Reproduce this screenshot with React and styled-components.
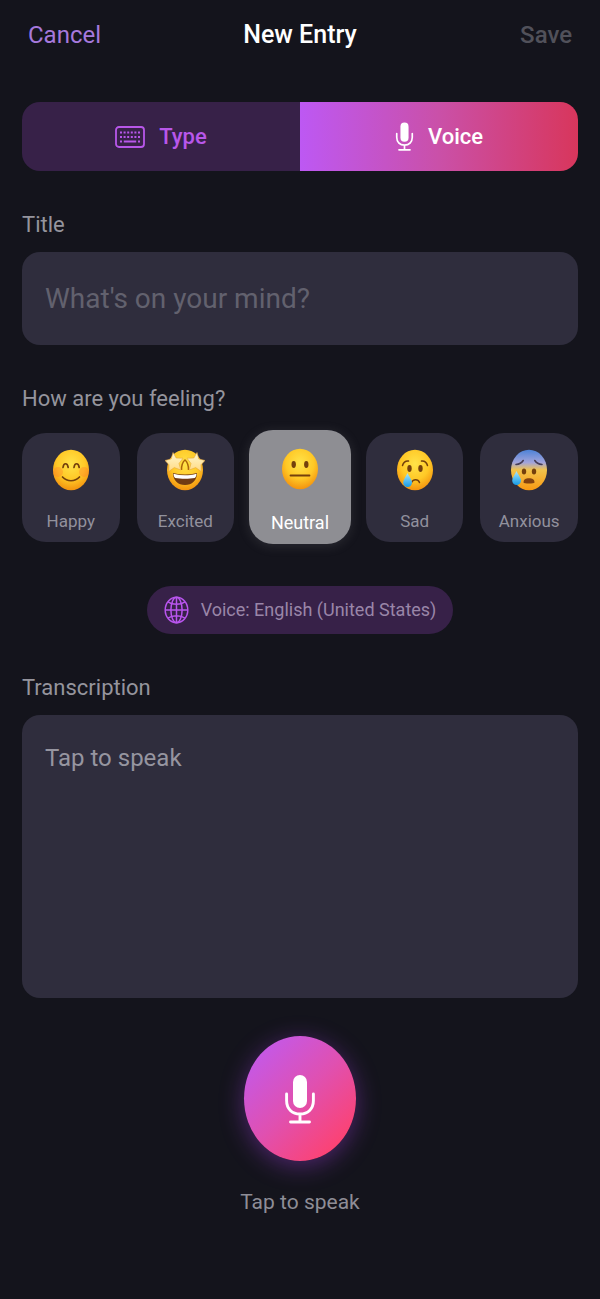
import React, { useState } from "react";
import styled, { createGlobalStyle } from "styled-components";

const GlobalStyle = createGlobalStyle`
    * {
        box-sizing: border-box;
    }

    body {
        margin: 0;
        background: #14141c;
        font-family: Roboto, "Liberation Sans", sans-serif;
    }

    button, input, textarea {
        font-family: inherit;
        border: 0;
        margin: 0;
    }

    button {
        cursor: pointer;
    }
`

const PageStyled = styled.div`
    min-height: 100vh;
    padding: 0 22px 80px;
    background: #14141c;
`

const HeaderStyled = styled.header`
    display: grid;
    grid-template-columns: 1fr auto 1fr;
    align-items: center;
    height: 70px;
    padding: 0 6px;
`

const TitleStyled = styled.h1`
    margin: 0;
    font-size: 25px;
    line-height: 32px;
    font-weight: 500;
    color: #fff;
`

const HeaderButton = styled.button`
    justify-self: ${({ $end }) => ($end ? "end" : "start")};
    padding: 0;
    background: none;
    font-size: 24px;
    line-height: 32px;
    font-weight: ${({ $end }) => ($end ? 500 : 400)};
    color: ${({ $end }) => ($end ? "#51515a" : "#a679dc")};
`

const ModeStyled = styled.div`
    display: flex;
    height: 69px;
    margin-top: 32px;
    border-radius: 18px;
    overflow: hidden;
`

const ModeButton = styled.button`
    flex: 1;
    display: flex;
    align-items: center;
    justify-content: center;
    gap: 14px;
    padding: 0;
    font-size: 22px;
    line-height: 28px;
    font-weight: 500;
    color: ${({ $active }) => ($active ? "#fff" : "#b857ea")};
    background: ${({ $active }) => ($active ? "linear-gradient(90deg, #bd58f3 0%, #ca50a8 50%, #d8365c 100%)" : "#372148")};
`

const SectionStyled = styled.section`
    display: flex;
    flex-direction: column;
    gap: ${({ $gap }) => $gap || 13}px;
    margin-top: 40px;
`

const LabelStyled = styled.label`
    font-size: 22px;
    line-height: 28px;
    color: #95949d;
`

const InputStyled = styled.input`
    width: 100%;
    height: 93px;
    padding: 0 23px;
    border-radius: 18px;
    background: #2f2d3d;
    font-size: 28px;
    color: #fff;
    outline: none;

    &::placeholder {
        color: #62616e;
        opacity: 1;
    }
`

const TextareaStyled = styled.textarea`
    display: block;
    width: 100%;
    height: 283px;
    padding: 27px 23px;
    border-radius: 18px;
    background: #2f2d3d;
    font-size: 24px;
    line-height: 32px;
    color: #fff;
    outline: none;
    resize: none;

    &::placeholder {
        color: #9695a0;
        opacity: 1;
    }
`

const MoodListStyled = styled.div`
    display: grid;
    grid-template-columns: repeat(5, 1fr);
    gap: 17px;
`

const MoodButton = styled.button`
    display: flex;
    flex-direction: column;
    align-items: center;
    justify-content: space-between;
    height: ${({ $active }) => ($active ? 114 : 109)}px;
    margin: ${({ $active }) => ($active ? "-3px -2px -2px" : "0")};
    padding: ${({ $active }) => ($active ? "17px 0 11px" : "15px 0 11px")};
    border-radius: 24px;
    font-size: ${({ $active }) => ($active ? 18 : 17)}px;
    line-height: 20px;
    color: ${({ $active }) => ($active ? "#fff" : "#92919d")};
    background: ${({ $active }) => ($active ? "#8e8e93" : "#2f2d3d")};
    box-shadow: ${({ $active }) => ($active ? "0 2px 12px rgba(142, 142, 147, 0.2)" : "none")};
`

const LanguageButton = styled.button`
    display: flex;
    align-items: center;
    gap: 12px;
    height: 48px;
    margin: 44px auto 0;
    padding: 0 17px;
    border-radius: 24px;
    background: #372148;
    font-size: 18px;
    line-height: 24px;
    color: #9a86a8;
`

const RecordStyled = styled.div`
    display: flex;
    flex-direction: column;
    align-items: center;
    gap: 27px;
    margin-top: 38px;
    font-size: 21px;
    line-height: 28px;
    color: #8e8d96;
`

const RecordButton = styled.button`
    display: flex;
    align-items: center;
    justify-content: center;
    width: 112px;
    height: 125px;
    padding: 0;
    border-radius: 50%;
    background: linear-gradient(135deg, #bf5af2 5%, #e050b0 50%, #ff416c 90%);
    box-shadow: 0 5px 24px rgba(150, 60, 210, 0.45);
`

const KeyboardIcon = () => (
    <svg width="30" height="22" viewBox="0 0 30 22" fill="none" stroke="currentColor" aria-hidden="true">
        <rect x="1" y="1" width="28" height="20" rx="3" strokeWidth="1.8" />
        <path d="M5 6.5h20M5 11h20" strokeWidth="2.1" strokeDasharray="2 1.6" />
        <path d="M5 15.5h2M8.8 15.5h12.4M23 15.5h2" strokeWidth="2" />
    </svg>
)

const MicIcon = ({ width, height }) => (
    <svg width={width} height={height} viewBox="0 0 30 50" fill="none" stroke="#fff" strokeLinecap="round" aria-hidden="true">
        <rect x="8" y="1" width="14" height="33" rx="7" fill="#fff" stroke="none" />
        <path d="M1.6 20v6.5C1.6 35 7.2 40 15 40s13.4-5 13.4-13.5V20M15 40v8M5.5 48h19" strokeWidth="2.9" />
    </svg>
)

const GlobeIcon = () => (
    <svg width="25" height="28" viewBox="0 0 25 28" fill="none" stroke="#b955ee" strokeWidth="1.5" aria-hidden="true">
        <ellipse cx="12.5" cy="14" rx="11.3" ry="12.8" />
        <ellipse cx="12.5" cy="14" rx="5.6" ry="12.8" />
        <path d="M12.5 1.2v25.6M1.2 14h22.6M4 5.8c4.4 3.2 12.6 3.2 17 0M4 22.2c4.4-3.2 12.6-3.2 17 0" />
    </svg>
)

const Tear = () => (
    <path d="M12.5 25c-1.8 4-4.3 6.8-4.3 9.6a4.4 4.4 0 0 0 8.8 0c0-2.8-2.7-5.6-4.5-9.6z" fill="url(#tear)" />
)

const faces = {
    happy: (
        <>
            <ellipse cx="7" cy="24" rx="5" ry="5" fill="#ff7a2c" opacity=".35" />
            <ellipse cx="33" cy="24" rx="5" ry="5" fill="#ff7a2c" opacity=".35" />
            <path d="M12 19.5c.7-5 4.4-5 5.2 0M23 19.5c.7-5 4.4-5 5.2 0M11.5 29c4.8 5 12.2 5 17 0" fill="none" stroke="#74400c" strokeWidth="1.7" strokeLinecap="round" />
        </>
    ),
    excited: (
        <>
            <path d="M8 25c8 2 16 2 24 0 0 7.5-5 12-12 12S8 32.500 8 25z" fill="#713b13" />
            <path d="M8.500 25.700c7.500 2 15.500 2 23 0-.2 2.500-1 4-1.800 4.300-5.500 1.100-13.900 1.100-19.400 0-.8-.3-1.600-1.800-1.800-4.300z" fill="#fff" />
            <path d="M16.500 22c0-5 1-8 3.500-10 2.500 2 3.500 5 3.500 10" fill="none" stroke="#a9650b" strokeWidth="1.500" />
            <path d="M8 4.500l3.200 5.500 6.800.2-4 5.300 1.800 6.500-6.500-2.400-5.600 4 .3-6.800L0 12.500l6.200-1.600z" fill="url(#star)" stroke="#e7a63a" strokeWidth=".6" />
            <path d="M32 4.500l-3.200 5.500-6.800.2 4 5.300-1.800 6.500 6.500-2.400 5.600 4-.3-6.800 4-4.300-6.200-1.600z" fill="url(#star)" stroke="#e7a63a" strokeWidth=".6" />
        </>
    ),
    neutral: (
        <>
            <ellipse cx="13.700" cy="17.500" rx="2.200" ry="3.400" fill="#74400c" />
            <ellipse cx="26.300" cy="17.500" rx="2.200" ry="3.400" fill="#74400c" />
            <path d="M10.500 28.500h19" stroke="#74400c" strokeWidth="1.800" strokeLinecap="round" />
        </>
    ),
    sad: (
        <>
            <ellipse cx="14.500" cy="20.500" rx="2.200" ry="3.400" fill="#74400c" />
            <ellipse cx="25.500" cy="20.500" rx="2.200" ry="3.400" fill="#74400c" />
            <path d="M7.500 17.500c1-3.200 3-4.700 6-4.400M32.500 17.500c-1-3.200-3-4.700-6-4.400M16.500 34.500c1.800-3.800 6.500-3.800 8 0" fill="none" stroke="#74400c" strokeWidth="1.500" strokeLinecap="round" />
            <Tear />
        </>
    ),
    anxious: (
        <>
            <ellipse cx="15" cy="23.500" rx="2.200" ry="3" fill="#74400c" />
            <ellipse cx="25" cy="23.500" rx="2.200" ry="3" fill="#74400c" />
            <path d="M7 16.500c3.500-.3 5.800-1.800 7.200-4M33 16.500c-3.500-.3-5.800-1.800-7.200-4" fill="none" stroke="#453d58" strokeWidth="1.600" strokeLinecap="round" />
            <path d="M14.500 34.500c0-3.300 2.200-4.300 5.500-4.300s5.500 1 5.500 4.300c0 1.300-11 1.300-11 0z" fill="#82420f" />
            <g transform="translate(-5 -2)"><Tear /></g>
        </>
    ),
}

const MoodFace = ({ id }) => (
    <svg width="40" height="44" viewBox="0 0 40 44" aria-hidden="true">
        <defs>
            <radialGradient id="face" cx=".5" cy=".35" r=".65">
                <stop offset="0" stopColor="#ffe349" />
                <stop offset=".6" stopColor="#ffc826" />
                <stop offset="1" stopColor="#f3930f" />
            </radialGradient>
            <linearGradient id="cold" x1="0" y1="0" x2="0" y2="1">
                <stop offset="0" stopColor="#4c82d8" />
                <stop offset=".32" stopColor="#a3a4da" />
                <stop offset=".5" stopColor="#f2c34b" />
                <stop offset="1" stopColor="#f99912" />
            </linearGradient>
            <linearGradient id="tear" x1="0" y1="0" x2="0" y2="1">
                <stop offset="0" stopColor="#a8e8ff" />
                <stop offset="1" stopColor="#169be5" />
            </linearGradient>
            <linearGradient id="star" x1="0" y1="0" x2="0" y2="1">
                <stop offset="0" stopColor="#fff8cf" />
                <stop offset="1" stopColor="#ffd982" />
            </linearGradient>
        </defs>
        <ellipse cx="20" cy="22" rx="18" ry="20.300" fill={id === "anxious" ? "url(#cold)" : "url(#face)"} />
        {faces[id]}
    </svg>
)

const moods = [
    { id: "happy", name: "Happy" },
    { id: "excited", name: "Excited" },
    { id: "neutral", name: "Neutral" },
    { id: "sad", name: "Sad" },
    { id: "anxious", name: "Anxious" },
]

const App = () => {
    const [mode, setMode] = useState("voice");
    const [mood, setMood] = useState("neutral");
    const [title, setTitle] = useState("");
    const [text, setText] = useState("");

    return (
        <>
            <GlobalStyle />
            <PageStyled>
                <HeaderStyled>
                    <HeaderButton type="button">Cancel</HeaderButton>
                    <TitleStyled>New Entry</TitleStyled>
                    <HeaderButton type="button" $end>Save</HeaderButton>
                </HeaderStyled>

                <main>
                    <ModeStyled>
                        <ModeButton type="button" $active={mode === "type"} onClick={() => setMode("type")}>
                            <KeyboardIcon />
                            Type
                        </ModeButton>
                        <ModeButton type="button" $active={mode === "voice"} onClick={() => setMode("voice")}>
                            <MicIcon width={19} height={29} />
                            Voice
                        </ModeButton>
                    </ModeStyled>

                    <SectionStyled>
                        <LabelStyled htmlFor="title">Title</LabelStyled>
                        <InputStyled
                            id="title"
                            placeholder="What's on your mind?"
                            autoComplete="off"
                            value={title}
                            onChange={(e) => setTitle(e.target.value)}
                        />
                    </SectionStyled>

                    <SectionStyled $gap={20}>
                        <LabelStyled as="span" id="mood-label">How are you feeling?</LabelStyled>
                        <MoodListStyled role="group" aria-labelledby="mood-label">
                            {moods.map(item => (
                                <MoodButton
                                    key={item.id}
                                    type="button"
                                    aria-pressed={mood === item.id}
                                    $active={mood === item.id}
                                    onClick={() => setMood(item.id)}
                                >
                                    <MoodFace id={item.id} />
                                    {item.name}
                                </MoodButton>
                            ))}
                        </MoodListStyled>
                    </SectionStyled>

                    <LanguageButton type="button">
                        <GlobeIcon />
                        Voice: English (United States)
                    </LanguageButton>

                    <SectionStyled>
                        <LabelStyled htmlFor="transcription">Transcription</LabelStyled>
                        <TextareaStyled
                            id="transcription"
                            placeholder="Tap to speak"
                            value={text}
                            onChange={(e) => setText(e.target.value)}
                        />
                    </SectionStyled>

                    <RecordStyled>
                        <RecordButton type="button" aria-label="Record">
                            <MicIcon width={30} height={50} />
                        </RecordButton>
                        <span>Tap to speak</span>
                    </RecordStyled>
                </main>
            </PageStyled>
        </>
    );
}

export default App;
